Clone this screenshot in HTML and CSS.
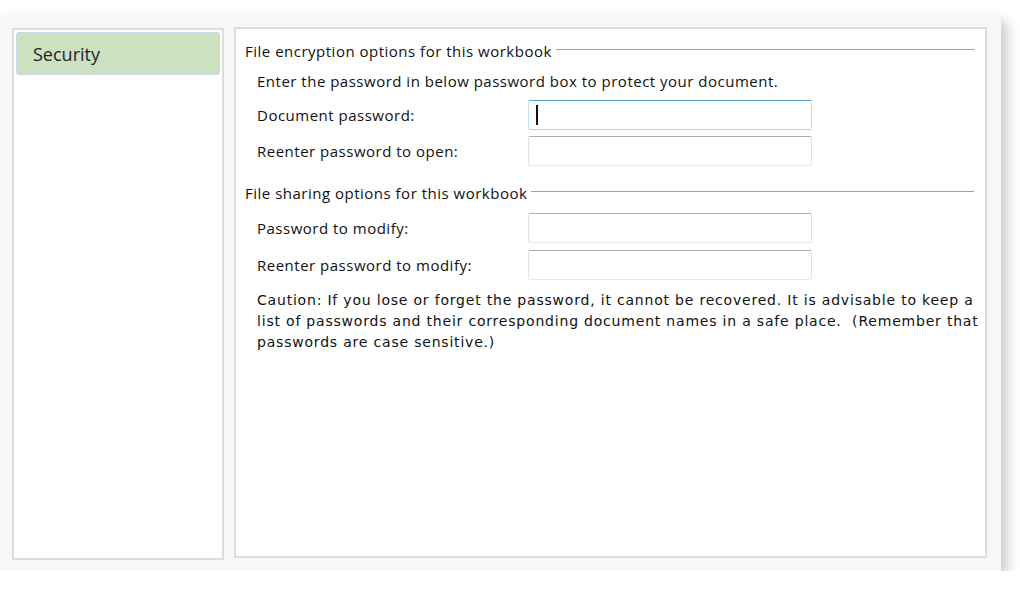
FILE: index.html
```html
<!DOCTYPE html>
<html>
<head>
<meta charset="utf-8">
<link rel="stylesheet" href="styles.css">
</head>
<body>
<div class="window">
  <div class="sidebar">
    <div class="nav-item">Security</div>
  </div>
  <div class="content">
    <div class="group-title"><span>File encryption options for this workbook</span><div class="rule"></div></div>
    <div class="intro">Enter the password in below password box to protect your document.</div>
    <div class="row r1"><span class="label">Document password:</span><div class="box focused"><span class="caret"></span></div></div>
    <div class="row r2"><span class="label">Reenter password to open:</span><div class="box"></div></div>
    <div class="group-title g2"><span>File sharing options for this workbook</span><div class="rule"></div></div>
    <div class="row r3"><span class="label">Password to modify:</span><div class="box"></div></div>
    <div class="row r4"><span class="label">Reenter password to modify:</span><div class="box"></div></div>
    <div class="caution">Caution: If you lose or forget the password, it cannot be recovered. It is advisable to keep a<br>list of passwords and their corresponding document names in a safe place.&nbsp; (Remember that<br>passwords are case sensitive.)</div>
  </div>
</div>
</body>
</html>
```
FILE: styles.css
```css
html, body {
  margin: 0;
  padding: 0;
  background: #ffffff;
}
body {
  font-family: "Open Sans", "Noto Sans", sans-serif;
  color: #111111;
}
.window {
  margin-top: 15px;
  width: 1001px;
  height: 556px;
  box-sizing: border-box;
  background: #f7f7f7;
  box-shadow: 6px 6px 12px rgba(0, 0, 0, 0.22);
  display: flex;
  gap: 10px;
  padding: 13px 0 0 12px;
}
.sidebar {
  width: 212px;
  height: 532px;
  box-sizing: border-box;
  background: #ffffff;
  border: 2px solid #dddddd;
  padding: 2px;
}
.nav-item {
  height: 43px;
  box-sizing: border-box;
  background: #cde0bf;
  border: 1px solid #c3d6ea;
  border-radius: 3px;
  padding-left: 16px;
  display: flex;
  align-items: center;
  font-size: 18px;
  color: #1e1e30;
}
.content {
  width: 753px;
  height: 531px;
  margin-top: -1px;
  box-sizing: border-box;
  background: #ffffff;
  border: 2px solid #dddddd;
  padding: 12px 11px 0 9px;
  font-size: 15px;
  letter-spacing: 0.5px;
}
.group-title {
  height: 20px;
  display: flex;
  align-items: center;
  white-space: nowrap;
}
.group-title .rule {
  flex: 1;
  height: 1px;
  background: #a0a0a0;
  margin-left: 4px;
  margin-top: -3px;
}
.intro {
  margin: 10px 0 0 12px;
  line-height: 20px;
  white-space: nowrap;
}
.row {
  display: flex;
  align-items: center;
  margin-left: 12px;
  height: 30px;
  white-space: nowrap;
}
.r1 { margin-top: 9px; }
.r2 { margin-top: 6px; }
.g2 { margin-top: 17px; }
.r3 { margin-top: 10px; }
.r4 { margin-top: 7px; }
.label {
  width: 271px;
}
.box {
  width: 284px;
  height: 30px;
  box-sizing: border-box;
  border: 1px solid #e2e3ea;
  border-top-color: #abadb3;
  border-bottom-color: #e3e9ef;
  border-radius: 2px;
  background: #ffffff;
  position: relative;
}
.box.focused {
  border-color: #c5daed;
  border-top-color: #5c9fd8;
  border-bottom-color: #b8d3ee;
}
.caret {
  position: absolute;
  left: 7px;
  top: 4px;
  width: 2px;
  height: 20px;
  background: #111111;
}
.caution {
  margin: 10px 0 0 12px;
  font-family: "DejaVu Sans", "Liberation Sans", sans-serif;
  font-size: 14px;
  line-height: 21px;
  letter-spacing: 0.8px;
  white-space: nowrap;
}
```
